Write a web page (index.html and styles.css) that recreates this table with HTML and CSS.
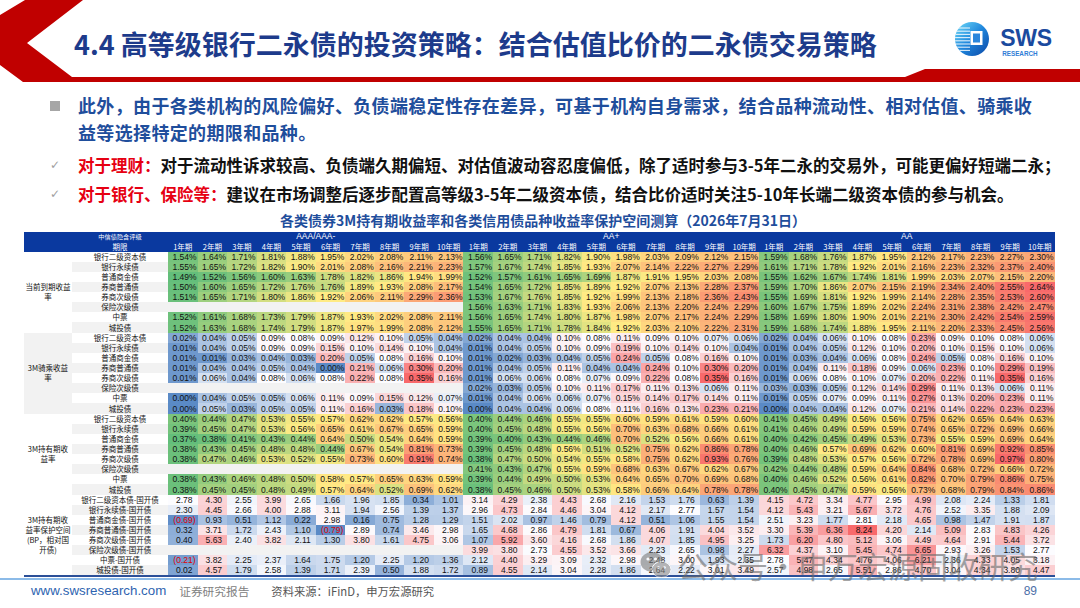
FILE: index.html
```html
<!DOCTYPE html>
<html lang="zh-CN">
<head>
<meta charset="utf-8">
<title>4.4 高等级银行二永债的投资策略</title>
<link rel="stylesheet" href="styles.css">
</head>
<body>
<header class="header">
  <svg class="header-bg" width="1080" height="86" viewBox="0 0 1080 86" aria-hidden="true">
    <polygon points="25,0 83,0 27,43 72,77 905,77 925,69 1080,69 1080,82 23,82 0,65 0,15" fill="#c00000"/>
  </svg>
  <h1 class="title">4.4 高等级银行二永债的投资策略：结合估值比价的二永债交易策略</h1>
  <div class="logo">
    <svg class="logo-mark" width="36" height="36" viewBox="0 0 36 36" aria-hidden="true">
      <defs>
        <linearGradient id="lg" x1="0" y1="0" x2="1" y2="1">
          <stop offset="0" stop-color="#6fdcf8"/>
          <stop offset="0.5" stop-color="#1f86dc"/>
          <stop offset="1" stop-color="#0b47a6"/>
        </linearGradient>
        <clipPath id="cc"><circle cx="18" cy="18" r="17"/></clipPath>
      </defs>
      <circle cx="18" cy="18" r="17" fill="url(#lg)"/>
      <g clip-path="url(#cc)" stroke="#ffffff" stroke-width="1.1" opacity="0.85">
        <line x1="0" y1="7" x2="16" y2="7"/>
        <line x1="0" y1="10.2" x2="16" y2="10.2"/>
        <line x1="0" y1="13.4" x2="16" y2="13.4"/>
        <line x1="0" y1="16.6" x2="16" y2="16.6"/>
        <line x1="0" y1="19.8" x2="16" y2="19.8"/>
        <line x1="0" y1="23" x2="16" y2="23"/>
        <line x1="0" y1="26.2" x2="16" y2="26.2"/>
        <line x1="0" y1="29.4" x2="16" y2="29.4"/>
      </g>
      <rect x="16.5" y="10" width="12" height="14" fill="#ffffff"/>
      <rect x="19" y="12.5" width="7" height="9" fill="#2a86dc"/>
    </svg>
    <div class="logo-text">
      <span class="logo-sws">SWS</span>
      <span class="logo-research">RESEARCH</span>
    </div>
  </div>
</header>

<section class="points">
  <p class="lead"><span class="sq"></span><span class="lead-text">此外，由于各类机构的风险偏好、负债端稳定性存在差异，可基于机构自身需求，结合品种流动性、相对估值、骑乘收<br>益等选择特定的期限和品种。</span></p>
  <p class="check"><span class="tick">✓</span><span><b class="red">对于理财：</b>对于流动性诉求较高、负债端久期偏短、对估值波动容忍度偏低，除了适时参与3-5年二永的交易外，可能更偏好短端二永；</span></p>
  <p class="check"><span class="tick">✓</span><span><b class="red">对于银行、保险等：</b>建议在市场调整后逐步配置高等级3-5年二级资本债，结合比价适时关注5-10年长端二级资本债的参与机会。</span></p>
</section>

<h2 class="tbl-title">各类债券3M持有期收益率和各类信用债品种收益率保护空间测算（2026年7月31日）</h2>

<div class="tbl-wrap">
  <table class="grid">
    <colgroup>
      <col class="w-sec"><col class="w-name">
      <col class="w-v"><col class="w-v"><col class="w-v"><col class="w-v"><col class="w-v"><col class="w-v"><col class="w-v"><col class="w-v"><col class="w-v"><col class="w-v">
      <col class="w-v"><col class="w-v"><col class="w-v"><col class="w-v"><col class="w-v"><col class="w-v"><col class="w-v"><col class="w-v"><col class="w-v"><col class="w-v">
      <col class="w-v"><col class="w-v"><col class="w-v"><col class="w-v"><col class="w-v"><col class="w-v"><col class="w-v"><col class="w-v"><col class="w-v"><col class="w-v">
    </colgroup>
    <thead>
      <tr class="hr">
        <th></th><th class="h-small">中信债隐含评级</th>
        <th colspan="10" class="h-grade">AAA/AAA-</th>
        <th colspan="10" class="h-grade">AA+</th>
        <th colspan="10" class="h-grade">AA</th>
      </tr>
      <tr class="hr">
        <th></th><th>期限</th>
        <th>1年期</th><th>2年期</th><th>3年期</th><th>4年期</th><th>5年期</th><th>6年期</th><th>7年期</th><th>8年期</th><th>9年期</th><th>10年期</th>
        <th>1年期</th><th>2年期</th><th>3年期</th><th>4年期</th><th>5年期</th><th>6年期</th><th>7年期</th><th>8年期</th><th>9年期</th><th>10年期</th>
        <th>1年期</th><th>2年期</th><th>3年期</th><th>4年期</th><th>5年期</th><th>6年期</th><th>7年期</th><th>8年期</th><th>9年期</th><th>10年期</th>
      </tr>
    </thead>
    <tbody id="tb"></tbody>
  </table>
</div>

<footer class="foot">
  <span class="url">www.swsresearch.com</span>
  <span class="rpt">证券研究报告</span>
  <span class="src">资料来源：iFinD，申万宏源研究</span>
  <span class="page">89</span>
</footer>

<div class="watermark" aria-hidden="true">
  <svg class="wm-icon" width="32" height="30" viewBox="0 0 32 30">
    <ellipse cx="12" cy="12" rx="11.5" ry="10" fill="#7a7a7a"/>
    <ellipse cx="21.5" cy="19.5" rx="9.5" ry="8" fill="#8a8a8a" stroke="#ffffff" stroke-width="1"/>
    <circle cx="8" cy="9" r="1.6" fill="#fff"/>
    <circle cx="15.5" cy="9" r="1.6" fill="#fff"/>
    <circle cx="18.5" cy="17.5" r="1.3" fill="#fff"/>
    <circle cx="24.5" cy="17.5" r="1.3" fill="#fff"/>
  </svg>
  <span class="wm-text">公众号·申万宏源固收研究</span>
</div>

<script src="script.js"></script>
</body>
</html>
```

FILE: styles.css
```css
* { box-sizing: border-box; margin: 0; padding: 0; }
html, body { width: 1080px; height: 608px; overflow: hidden; background: #ffffff; }
body {
  position: relative;
  font-family: "Noto Sans CJK SC", "Liberation Sans", sans-serif;
  color: #111;
}

/* header */
.header {
  position: relative;
  height: 86px;
  display: flex;
  align-items: flex-start;
  justify-content: space-between;
  padding: 0 28px 0 74px;
}
.header-bg { position: absolute; left: 0; top: 0; z-index: 0; }
.title {
  position: relative;
  z-index: 1;
  margin-top: 29px;
  font-size: 27px;
  line-height: 30px;
  font-weight: 700;
  color: #1d3b8b;
  white-space: nowrap;
}
.logo {
  position: relative;
  z-index: 1;
  margin-top: 21px;
  display: flex;
  align-items: flex-start;
  gap: 10px;
}
.logo-mark { display: block; }
.logo-text {
  display: flex;
  flex-direction: column;
  margin-top: 4px;
  font-family: "Liberation Sans", Arial, sans-serif;
  font-weight: 700;
}
.logo-sws { font-size: 23px; line-height: 26px; color: #1a4a9e; letter-spacing: -0.2px; }
.logo-research { font-size: 6.3px; line-height: 7px; color: #2f7dd6; padding-left: 2px; margin-top: -1px; }

/* bullet points */
.points { padding-left: 50px; margin-top: 6px; }
.lead {
  display: flex;
  align-items: flex-start;
  font-size: 18px;
  line-height: 27px;
  font-weight: 700;
  color: #1f4e9c;
  letter-spacing: 0.35px;
}
.sq { flex: none; width: 10px; height: 10px; background: #a6a6a6; margin: 9px 18px 0 0; }
.check {
  display: flex;
  align-items: flex-start;
  font-size: 16.5px;
  line-height: 29px;
  font-weight: 700;
  color: #111;
  white-space: nowrap;
}
.lead + .check { margin-top: 4.6px; }
.tick { flex: none; width: 28px; font-family: "DejaVu Sans", sans-serif; font-size: 12px; font-weight: 400; color: #a0a0a0; }
.red { color: #e60012; font-weight: 700; }

/* table title */
.tbl-title {
  margin-top: 3.6px;
  text-align: center;
  font-size: 14px;
  line-height: 16px;
  font-weight: 700;
  color: #1f4e9c;
  padding-left: 6px;
}

/* table */
.tbl-wrap { margin-top: 3.8px; padding-left: 24px; }
.grid {
  border-collapse: collapse;
  table-layout: fixed;
  width: 1030.5px;
  font-family: "Liberation Sans", Arial, sans-serif;
  font-size: 8.5px;
  color: #111;
  border-bottom: 2px solid #2b4f98;
}
.w-sec { width: 48px; }
.w-name { width: 96px; }
.w-v { width: 29.55px; }
.grid th, .grid td {
  padding: 0;
  white-space: nowrap;
  overflow: hidden;
  vertical-align: middle;
}
.grid thead th {
  height: 9.8px;
  line-height: 9.8px;
  background: #0a399f;
  color: #ffffff;
  font-family: "Noto Sans CJK SC", sans-serif;
  font-weight: 400;
  font-size: 7.5px;
  text-align: center;
}
.grid thead th.h-small { font-size: 6.2px; }
.grid thead th.h-grade { font-family: "Liberation Sans", Arial, sans-serif; font-size: 8.5px; }
.grid tbody td { height: 10.14px; line-height: 10px; }
.grid tbody tr.even td { background: #f2f2f2; }
.grid tbody tr td.sec {
  background: #ffffff;
  white-space: normal;
  text-align: center;
  font-family: "Noto Sans CJK SC", sans-serif;
  font-size: 7.5px;
  line-height: 10px;
  padding: 0 1px;
}
.grid tbody tr td.sec.sec-gray { background: #f2f2f2; }
.grid td.name {
  text-align: center;
  font-family: "Noto Sans CJK SC", sans-serif;
  font-size: 7.5px;
}
.grid td.v { text-align: right; }
.grid td.pct { padding-right: 1px; }
.grid td.bp { padding-right: 5px; }
.grid td.neg { color: #e00000; padding-right: 2px; }

/* footer */
.foot {
  margin-top: 1px;
  border-top: 2px solid #8cbbe8;
  display: flex;
  align-items: center;
  padding: 4px 43px 0 31px;
  line-height: 14px;
}
.url { font-family: "Liberation Sans", Arial, sans-serif; font-size: 13.3px; color: #2e64b0; }
.rpt { margin-left: 13px; font-size: 11.7px; color: #808080; }
.src { margin-left: 22px; font-size: 11.3px; color: #555555; }
.page { margin-left: auto; font-family: "Liberation Sans", Arial, sans-serif; font-size: 12px; color: #4d6fa8; }

/* watermark overlay */
.watermark {
  position: absolute;
  left: 640px;
  top: 549px;
  display: flex;
  align-items: center;
  gap: 6px;
  opacity: 0.6;
  pointer-events: none;
}
.wm-icon { display: block; }
.wm-text { font-size: 30px; line-height: 32px; color: #6a6a6a; font-weight: 400; white-space: nowrap; }
```

FILE: script.js
```js
(function () {
  var names = ['银行二级资本债', '银行永续债', '普通商金债', '券商普通债', '券商次级债', '保险次级债', '中票', '城投债'];
  var E = '- - - - - - - - - - ';
  var sections = [
    { label: '当前到期收益率', fmt: 'pct', pal: 'gyr', suffix: '', rows: [
      '1.54 1.64 1.71 1.81 1.88 1.95 2.02 2.08 2.11 2.13 1.56 1.65 1.71 1.82 1.90 1.98 2.03 2.09 2.12 2.15 1.59 1.68 1.76 1.87 1.95 2.12 2.17 2.23 2.27 2.30',
      '1.55 1.65 1.72 1.82 1.90 2.01 2.08 2.16 2.21 2.23 1.57 1.67 1.74 1.85 1.93 2.07 2.14 2.22 2.27 2.29 1.61 1.71 1.78 1.92 2.01 2.16 2.23 2.32 2.37 2.40',
      '1.49 1.52 1.56 1.60 1.63 1.78 1.82 1.86 1.94 1.99 1.52 1.57 1.61 1.65 1.69 1.87 1.91 1.95 2.03 2.08 1.55 1.62 1.67 1.74 1.81 1.99 2.03 2.07 2.15 2.20',
      '1.50 1.60 1.65 1.72 1.76 1.76 1.89 1.93 2.08 2.17 1.54 1.65 1.72 1.85 1.89 1.92 2.07 2.13 2.28 2.37 1.59 1.70 1.86 2.07 2.15 2.19 2.34 2.40 2.55 2.64',
      '1.51 1.65 1.71 1.80 1.86 1.92 2.06 2.11 2.29 2.36 1.53 1.67 1.76 1.85 1.92 1.99 2.13 2.18 2.36 2.43 1.55 1.69 1.81 1.92 1.99 2.14 2.28 2.35 2.53 2.60',
      E + '1.56 1.63 1.71 1.83 1.93 2.06 2.13 2.20 2.24 2.29 1.60 1.67 1.75 1.89 2.02 2.24 2.31 2.38 2.42 2.47',
      '1.52 1.61 1.68 1.73 1.79 1.87 1.93 2.02 2.08 2.11 1.56 1.65 1.74 1.80 1.87 1.98 2.07 2.17 2.24 2.29 1.58 1.69 1.80 1.90 2.01 2.21 2.30 2.42 2.54 2.59',
      '1.52 1.63 1.68 1.74 1.79 1.87 1.97 1.99 2.08 2.12 1.55 1.65 1.71 1.78 1.84 1.92 2.03 2.10 2.22 2.31 1.59 1.68 1.74 1.88 1.95 2.11 2.20 2.33 2.45 2.56'
    ]},
    { label: '3M骑乘收益率', fmt: 'pct', pal: 'bwr', suffix: '', gray: true, rows: [
      '0.02 0.04 0.05 0.09 0.08 0.09 0.12 0.10 0.05 0.04 0.02 0.04 0.04 0.10 0.08 0.11 0.09 0.10 0.07 0.06 0.02 0.04 0.06 0.10 0.08 0.23 0.09 0.10 0.08 0.06',
      '0.01 0.04 0.05 0.09 0.09 0.15 0.10 0.14 0.10 0.04 0.01 0.04 0.05 0.10 0.09 0.19 0.10 0.14 0.10 0.04 0.01 0.04 0.05 0.12 0.10 0.20 0.10 0.15 0.10 0.06',
      '0.01 0.01 0.03 0.04 0.03 0.20 0.05 0.08 0.16 0.10 0.01 0.02 0.03 0.04 0.05 0.24 0.05 0.08 0.16 0.10 0.01 0.03 0.04 0.06 0.08 0.24 0.05 0.08 0.16 0.10',
      '0.01 0.04 0.04 0.05 0.04 0.00 0.21 0.06 0.30 0.20 0.01 0.04 0.05 0.11 0.04 0.04 0.24 0.10 0.30 0.20 0.01 0.04 0.11 0.18 0.09 0.06 0.23 0.10 0.29 0.19',
      '0.01 0.06 0.04 0.08 0.06 0.08 0.22 0.08 0.35 0.16 0.01 0.06 0.06 0.08 0.07 0.09 0.22 0.08 0.35 0.16 0.01 0.06 0.08 0.10 0.07 0.20 0.22 0.11 0.35 0.16',
      E + '0.02 0.03 0.05 0.10 0.11 0.17 0.11 0.13 0.06 0.11 0.03 0.03 0.05 0.12 0.14 0.29 0.11 0.13 0.06 0.11',
      '0.00 0.04 0.05 0.05 0.06 0.11 0.09 0.15 0.12 0.07 0.01 0.04 0.06 0.06 0.07 0.15 0.14 0.17 0.14 0.11 0.01 0.05 0.07 0.09 0.11 0.27 0.13 0.20 0.23 0.11',
      '0.00 0.05 0.03 0.05 0.05 0.11 0.16 0.03 0.18 0.10 0.00 0.04 0.04 0.06 0.08 0.11 0.16 0.13 0.23 0.21 0.00 0.04 0.04 0.12 0.07 0.21 0.14 0.22 0.23 0.23'
    ]},
    { label: '3M持有期收益率', fmt: 'pct', pal: 'gyr', suffix: '', rows: [
      '0.40 0.44 0.47 0.53 0.55 0.57 0.62 0.62 0.57 0.56 0.40 0.44 0.46 0.55 0.55 0.60 0.59 0.61 0.59 0.60 0.41 0.45 0.49 0.56 0.56 0.75 0.62 0.65 0.64 0.63',
      '0.39 0.45 0.47 0.53 0.56 0.65 0.61 0.67 0.65 0.59 0.40 0.45 0.48 0.55 0.56 0.70 0.63 0.68 0.66 0.61 0.41 0.46 0.49 0.59 0.59 0.74 0.65 0.72 0.69 0.66',
      '0.37 0.38 0.41 0.43 0.44 0.64 0.50 0.54 0.64 0.59 0.39 0.40 0.43 0.44 0.46 0.70 0.52 0.56 0.66 0.61 0.40 0.42 0.45 0.49 0.53 0.73 0.55 0.59 0.69 0.64',
      '0.38 0.43 0.45 0.48 0.48 0.44 0.67 0.54 0.81 0.73 0.39 0.45 0.48 0.56 0.51 0.52 0.75 0.62 0.86 0.78 0.40 0.46 0.57 0.69 0.62 0.60 0.81 0.69 0.92 0.85',
      '0.38 0.47 0.46 0.53 0.52 0.55 0.73 0.60 0.91 0.74 0.38 0.47 0.50 0.54 0.55 0.58 0.75 0.62 0.93 0.76 0.39 0.48 0.53 0.57 0.56 0.72 0.78 0.69 0.97 0.80',
      E + '0.41 0.43 0.47 0.55 0.59 0.68 0.63 0.67 0.62 0.67 0.42 0.44 0.48 0.59 0.64 0.84 0.68 0.72 0.66 0.72',
      '0.38 0.43 0.46 0.48 0.50 0.58 0.57 0.65 0.63 0.59 0.39 0.44 0.49 0.50 0.53 0.64 0.65 0.70 0.69 0.68 0.40 0.46 0.52 0.56 0.61 0.82 0.70 0.79 0.86 0.75',
      '0.38 0.45 0.45 0.48 0.49 0.57 0.64 0.52 0.69 0.62 0.38 0.45 0.46 0.50 0.53 0.58 0.66 0.64 0.78 0.78 0.40 0.45 0.47 0.59 0.56 0.73 0.68 0.79 0.84 0.86'
    ]},
    { label: '3M持有期收益率保护空间(BP，相对国开债)', fmt: 'bp', pal: 'bwr', suffix: '-国开债', rows: [
      '2.78 4.30 2.55 3.99 2.65 1.66 1.96 1.85 0.34 1.01 3.14 4.29 2.38 4.43 2.68 2.16 1.53 1.76 0.63 1.39 4.15 4.72 3.34 4.77 2.95 4.99 2.08 2.24 1.33 1.81',
      '2.30 4.45 2.66 4.00 2.88 3.11 1.94 2.56 1.39 1.37 2.96 4.73 2.84 4.46 3.04 4.12 2.17 2.77 1.57 1.54 4.12 5.43 3.21 5.67 3.72 4.76 2.52 3.35 1.88 2.09',
      '-0.69 0.93 0.51 1.12 0.22 2.98 0.16 0.75 1.28 1.29 1.51 2.02 0.97 1.46 0.79 4.12 0.51 1.06 1.55 1.54 2.51 3.23 1.77 2.81 2.18 4.65 0.98 1.47 1.91 1.87',
      '0.32 3.71 1.72 2.43 1.10 -0.79 2.89 0.74 3.46 2.98 1.65 4.68 2.86 4.79 1.81 0.67 4.06 1.91 4.04 3.52 3.30 5.39 6.36 8.24 4.20 2.14 5.09 2.83 4.83 4.26',
      '0.40 5.63 2.40 3.82 2.11 1.30 3.80 1.61 4.75 3.06 1.07 5.92 3.60 4.16 2.68 1.86 4.07 1.85 4.95 3.25 1.73 6.20 4.80 5.12 3.06 4.49 4.64 2.91 5.44 3.72',
      E + '3.99 3.80 2.73 4.55 3.52 3.66 2.23 2.65 0.98 2.27 6.32 4.37 3.10 5.45 4.74 6.65 2.93 3.26 1.53 2.77',
      '-0.21 3.82 2.25 2.37 1.64 1.75 1.20 2.25 1.20 1.36 2.12 4.40 3.29 3.09 2.32 2.98 2.48 3.00 1.93 2.35 2.78 5.47 4.34 4.76 4.06 6.21 2.36 4.33 4.05 3.18',
      '0.02 4.57 1.79 2.58 1.39 1.71 2.39 0.50 1.88 1.72 0.89 4.55 2.14 3.04 2.28 1.86 2.64 2.22 3.01 3.49 2.57 4.98 2.65 5.51 2.86 4.70 3.04 4.34 3.80 4.47'
    ]}
  ];
  var PAL = {
    gyr: [[99, 190, 123], [255, 235, 132], [248, 105, 107]],
    bwr: [[90, 138, 198], [252, 252, 255], [248, 105, 107]]
  };
  function percentile(arr, p) {
    var s = arr.slice().sort(function (a, b) { return a - b; });
    var k = (s.length - 1) * p, f = Math.floor(k), c = Math.ceil(k);
    return s[f] + (s[c] - s[f]) * (k - f);
  }
  function mix(a, b, t) {
    t = Math.max(0, Math.min(1, t));
    return a.map(function (x, i) { return Math.round(x + (b[i] - x) * t); });
  }
  var tb = document.getElementById('tb');
  var rowNo = 0;
  sections.forEach(function (sec) {
    var data = sec.rows.map(function (r) {
      return r.trim().split(/\s+/).map(function (t) { return t === '-' ? null : parseFloat(t); });
    });
    var vals = [];
    data.forEach(function (r) { r.forEach(function (v) { if (v !== null) vals.push(v); }); });
    var mn = Math.min.apply(null, vals), mx = Math.max.apply(null, vals), md = percentile(vals, 0.5);
    var pal = PAL[sec.pal];
    data.forEach(function (row, ri) {
      rowNo++;
      var tr = document.createElement('tr');
      tr.className = rowNo % 2 === 0 ? 'even' : 'odd';
      if (ri === 0) {
        var sc = document.createElement('td');
        sc.rowSpan = data.length;
        sc.className = 'sec' + (sec.gray ? ' sec-gray' : '');
        sc.textContent = sec.label;
        tr.appendChild(sc);
      }
      var nm = document.createElement('td');
      nm.className = 'name';
      nm.textContent = names[ri] + sec.suffix;
      tr.appendChild(nm);
      row.forEach(function (v) {
        var td = document.createElement('td');
        td.className = 'v ' + sec.fmt;
        if (v !== null) {
          var c = v <= md ? mix(pal[0], pal[1], md === mn ? 1 : (v - mn) / (md - mn))
                          : mix(pal[1], pal[2], (v - md) / (mx - md));
          td.style.background = 'rgb(' + c.join(',') + ')';
          if (sec.fmt === 'pct') {
            td.textContent = v.toFixed(2) + '%';
          } else if (v < 0) {
            td.textContent = '(' + Math.abs(v).toFixed(2) + ')';
            td.classList.add('neg');
          } else {
            td.textContent = v.toFixed(2);
          }
        }
        tr.appendChild(td);
      });
      tb.appendChild(tr);
    });
  });
})();
```
